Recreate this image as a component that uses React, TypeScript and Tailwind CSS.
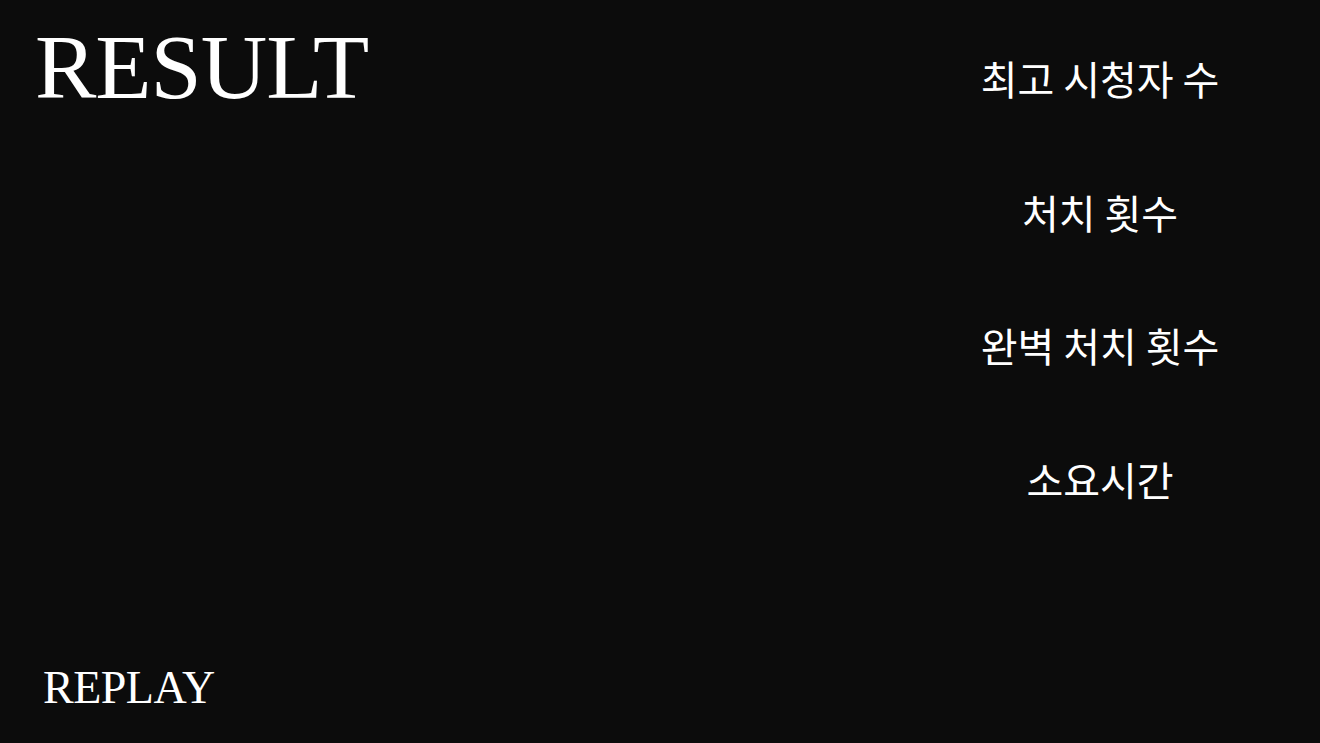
const stats = ["최고 시청자 수", "처치 횟수", "완벽 처치 횟수", "소요시간"];

export default function App() {
  return (
    <div className="flex h-screen w-full bg-[#0c0c0c] text-white overflow-hidden">
      {/* Left: title + replay */}
      <div className="flex flex-1 flex-col justify-between pl-[35px] pt-[21px] pb-[32px]">
        <h1 className="text-[92px] leading-none font-['Liberation_Serif',serif] tracking-[-1px]">
          RESULT
        </h1>
        <button className="self-start pl-[8px] text-[46px] leading-none font-['Liberation_Serif',serif] tracking-[-0.5px] text-white">
          REPLAY
        </button>
      </div>

      {/* Right: stat labels */}
      <div className="flex w-[440px] flex-col items-center gap-[93.5px] pt-[58px]">
        {stats.map((s) => (
          <div
            key={s}
            className="text-[40px] leading-none font-['Noto_Sans_CJK_KR',sans-serif] whitespace-pre"
          >
            {s}
          </div>
        ))}
      </div>
    </div>
  );
}
